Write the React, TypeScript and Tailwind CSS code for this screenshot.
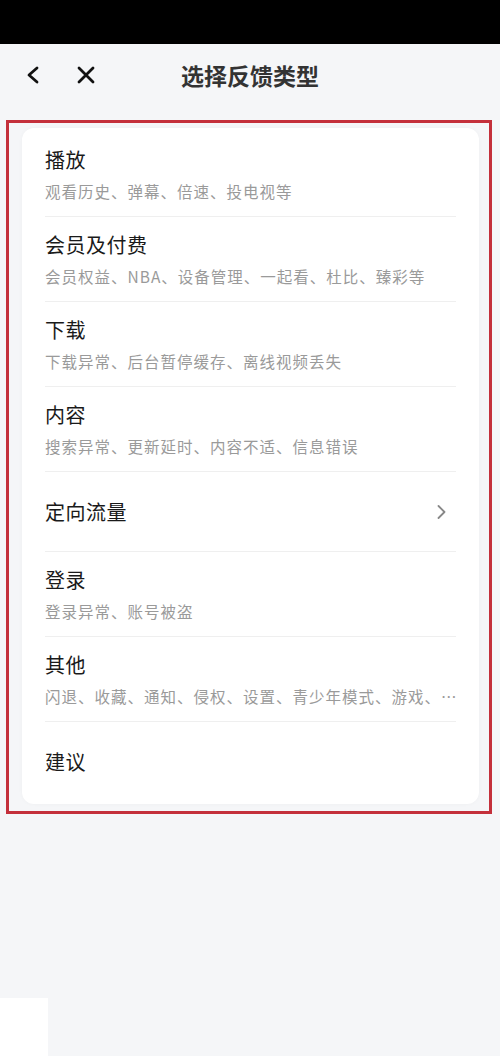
const items = [
  { title: "播放", sub: "观看历史、弹幕、倍速、投电视等" },
  { title: "会员及付费", sub: "会员权益、NBA、设备管理、一起看、杜比、臻彩等" },
  { title: "下载", sub: "下载异常、后台暂停缓存、离线视频丢失" },
  { title: "内容", sub: "搜索异常、更新延时、内容不适、信息错误" },
  { title: "定向流量", arrow: true },
  { title: "登录", sub: "登录异常、账号被盗" },
  { title: "其他", sub: "闪退、收藏、通知、侵权、设置、青少年模式、游戏、…" },
  { title: "建议" },
];

const font = { fontFamily: '"Noto Sans CJK SC", "Noto Sans", sans-serif' };

export default function App() {
  return (
    <div className="w-[500px] h-[1056px] bg-[#f5f6f8] flex flex-col relative" style={font}>
      <div className="h-[44px] bg-black shrink-0" />

      <div className="h-[62px] relative flex items-center shrink-0">
        <svg className="absolute left-[25px] top-[22px]" width="16" height="18" viewBox="0 0 16 18" fill="none">
          <path d="M12 2 L4 9 L12 16" stroke="#111" strokeWidth="2.8" strokeLinecap="round" strokeLinejoin="round" />
        </svg>
        <svg className="absolute left-[77px] top-[22px]" width="18" height="18" viewBox="0 0 18 18" fill="none">
          <path d="M2 2 L16 16 M16 2 L2 16" stroke="#111" strokeWidth="2.8" strokeLinecap="round" />
        </svg>
        <div className="w-full text-center text-[23px] font-bold text-[#333] leading-none">选择反馈类型</div>
      </div>

      <div className="mt-[14px] ml-[6px] w-[486px] border-[3px] border-[#c4303b] pl-[13px] pr-[10px] pt-[5px] pb-[7px]">
        <div className="bg-white rounded-xl px-[23px] pt-[4px] pb-[2px] shadow-[0_0_4px_rgba(0,0,0,0.03)]">
          {items.map((it, i) => (
            <div
              key={it.title}
              className={`flex items-center ${i < items.length - 1 ? "border-b border-[#efefef]" : ""} ${
                it.sub ? "h-[85px]" : "h-[80px]"
              }`}
            >
              <div className="flex-1 min-w-0">
                <div className="text-[20px] tracking-[0.5px] leading-[26px] text-[#1a1a1a]">{it.title}</div>
                {it.sub && (
                  <div className="mt-[8px] text-[15.5px] tracking-[1px] leading-[20px] text-[#9a9a9a] whitespace-nowrap">
                    {it.sub}
                  </div>
                )}
              </div>
              {it.arrow && (
                <svg className="mr-[10px]" width="9" height="16" viewBox="0 0 9 16" fill="none">
                  <path d="M1.5 2 L7.5 8 L1.5 14" stroke="#888" strokeWidth="1.8" strokeLinecap="round" strokeLinejoin="round" />
                </svg>
              )}
            </div>
          ))}
        </div>
      </div>

      <div className="absolute left-0 bottom-0 w-[48px] h-[58px] bg-white" />
    </div>
  );
}
